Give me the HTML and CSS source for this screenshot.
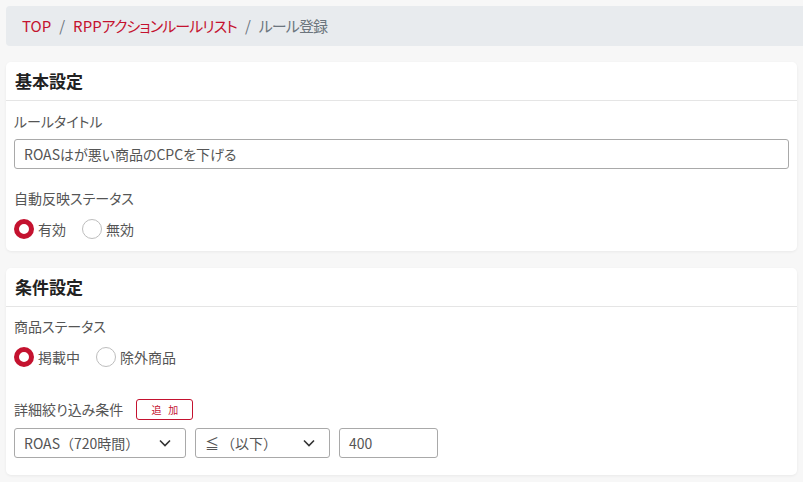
FILE: index.html
```html
<!DOCTYPE html>
<html lang="ja">
<head>
<meta charset="utf-8">
<link rel="stylesheet" href="styles.css">
</head>
<body>
<div class="page">
  <nav class="breadcrumb">
    <a class="crumb link">TOP</a>
    <span class="sep">/</span>
    <a class="crumb link">RPP<span class="kana">アクションルールリスト</span></a>
    <span class="sep">/</span>
    <span class="crumb current kana">ルール登録</span>
  </nav>

  <section class="card card-basic">
    <header class="card-header">基本設定</header>
    <div class="card-body">
      <div class="label">ルールタイトル</div>
      <div class="text-input">ROASはが悪い商品のCPCを下げる</div>
      <div class="label label-gap">自動反映ステータス</div>
      <div class="radios">
        <span class="radio checked"></span><span class="radio-text">有効</span>
        <span class="radio"></span><span class="radio-text">無効</span>
      </div>
    </div>
  </section>

  <section class="card card-cond">
    <header class="card-header">条件設定</header>
    <div class="card-body">
      <div class="label">商品ステータス</div>
      <div class="radios">
        <span class="radio checked"></span><span class="radio-text">掲載中</span>
        <span class="radio"></span><span class="radio-text">除外商品</span>
      </div>
      <div class="filter-head">
        <span class="label">詳細絞り込み条件</span>
        <span class="add-btn">追&nbsp;&nbsp;&nbsp;加</span>
      </div>
      <div class="filter-row">
        <div class="select sel-metric"><span>ROAS（720時間）</span>
          <svg class="chev" width="12" height="8" viewBox="0 0 12 8"><path d="M1 1.5 L6 6.5 L11 1.5" fill="none" stroke="#333" stroke-width="1.6"/></svg>
        </div>
        <div class="select sel-op"><span><span class="op">≦</span>（以下）</span>
          <svg class="chev" width="12" height="8" viewBox="0 0 12 8"><path d="M1 1.5 L6 6.5 L11 1.5" fill="none" stroke="#333" stroke-width="1.6"/></svg>
        </div>
        <div class="text-input value-input">400</div>
      </div>
    </div>
  </section>
</div>
</body>
</html>
```

FILE: styles.css
```css
* { box-sizing: border-box; }
html, body { margin: 0; padding: 0; }
body {
  background: #f7f7f7;
  font-family: "Noto Sans CJK JP", "Noto Sans", sans-serif;
  color: #555;
  width: 803px;
  height: 482px;
  overflow: hidden;
}
.page {
  padding: 6px 6px 0 6px;
}
.breadcrumb {
  height: 40px;
  margin-right: -6px;
  background: #e8ebee;
  border-radius: 4px 0 0 4px;
  display: flex;
  align-items: center;
  padding-left: 16px;
  font-size: 15px;
  line-height: 20px;
  font-feature-settings: "palt";
}
.kana { letter-spacing: -0.9px; }
.crumb.link { color: #c4122f; text-decoration: none; }
.crumb.current { color: #6c757d; }
.sep { color: #6c757d; margin: 0 8px; }

.card {
  background: #fff;
  border-radius: 5px;
  box-shadow: 0 1px 3px rgba(0,0,0,0.06);
}
.card-basic { margin-top: 16px; }
.card-cond { margin-top: 17px; }
.card-header {
  height: 39px;
  padding: 0 9px 1px;
  display: flex;
  align-items: center;
  font-size: 17px;
  font-weight: bold;
  color: #222;
  border-bottom: 1px solid #e5e5e5;
}
.card-basic .card-body { padding: 10px 8px 12px 8px; }
.card-cond .card-body { padding: 9px 8px 17px 8px; }
.label {
  font-size: 14px;
  line-height: 20px;
  color: #555;
  font-feature-settings: "palt";
}
.text-input {
  margin-top: 8px;
  height: 30px;
  border: 1px solid #a9a9a9;
  border-radius: 3px;
  padding: 0 9px;
  font-size: 14px;
  line-height: 28px;
  color: #555;
  font-feature-settings: "palt";
}
.label-gap { margin-top: 19px; }
.radios {
  margin-top: 11px;
  display: flex;
  align-items: center;
  height: 20px;
}
.radio {
  width: 20px;
  height: 20px;
  border-radius: 50%;
  border: 1px solid #bdbdbd;
  background: #fff;
  flex: none;
}
.radio.checked {
  border: 5px solid #c4122f;
}
.radio-text {
  font-size: 14px;
  line-height: 20px;
  color: #555;
  margin-left: 4px;
  margin-right: 16px;
}
.filter-head {
  margin-top: 31px;
  display: flex;
  align-items: center;
  height: 22px;
}
.add-btn {
  margin-left: 13px;
  width: 57px;
  height: 21px;
  border: 1px solid #c4122f;
  border-radius: 3px;
  color: #c4122f;
  font-size: 10px;
  display: flex;
  align-items: center;
  justify-content: center;
}
.filter-row {
  margin-top: 8px;
  display: flex;
  gap: 9px;
}
.select {
  height: 30px;
  border: 1px solid #a9a9a9;
  border-radius: 3px;
  padding: 0 14px 0 9px;
  display: flex;
  align-items: center;
  justify-content: space-between;
  font-size: 14px;
  color: #555;
}
.sel-metric { width: 172px; }
.sel-op { width: 135px; }
.op { margin-right: 2px; }
.value-input {
  margin-top: 0;
  width: 99px;
  font-feature-settings: normal;
}
```
